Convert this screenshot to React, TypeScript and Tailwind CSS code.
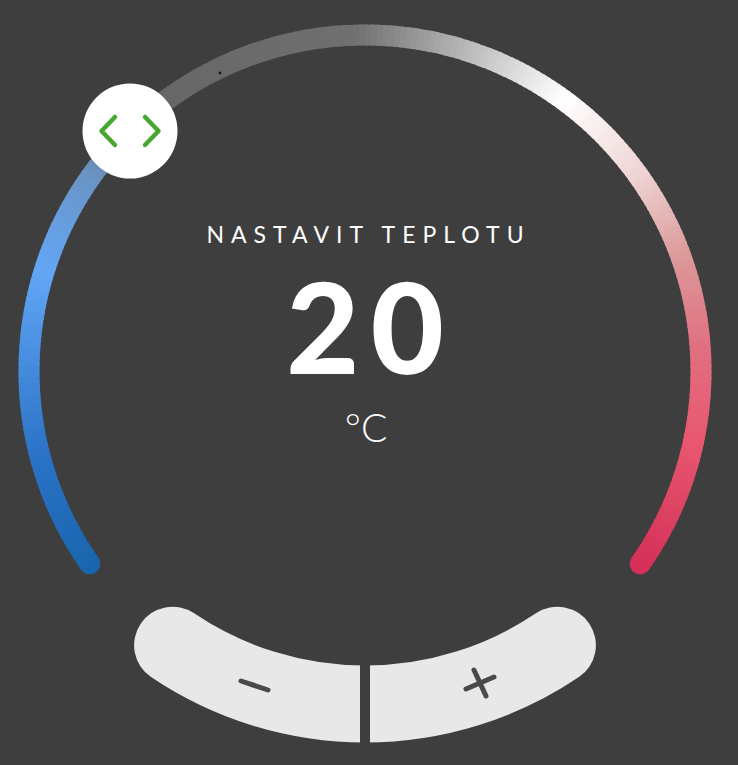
import React from "react";

const CX = 365;
const CY = 371;
const R = 336;

const stops: [number, string][] = [
  [145, "#1a66ae"],
  [165, "#2a72c6"],
  [197, "#62a6f5"],
  [215, "#6a94c6"],
  [232, "#666666"],
  [268, "#707070"],
  [271, "#7a7a7a"],
  [306, "#ffffff"],
  [323, "#f0d8d8"],
  [340, "#dc9a9a"],
  [356, "#e07080"],
  [372, "#e85870"],
  [395, "#d53058"],
];

const hex = (c: string) => [1, 3, 5].map((i) => parseInt(c.slice(i, i + 2), 16));

const colorAt = (a: number) => {
  for (let i = 0; i < stops.length - 1; i++) {
    const [a0, c0] = stops[i];
    const [a1, c1] = stops[i + 1];
    if (a >= a0 && a <= a1) {
      const t = (a - a0) / (a1 - a0);
      const p = hex(c0);
      const q = hex(c1);
      const m = p.map((v, k) => Math.round(v + (q[k] - v) * t));
      return `rgb(${m[0]},${m[1]},${m[2]})`;
    }
  }
  return stops[stops.length - 1][1];
};

const pt = (a: number, r = R) => {
  const rad = (a * Math.PI) / 180;
  return [CX + r * Math.cos(rad), CY + r * Math.sin(rad)];
};

const DialArc = () => {
  const segs = [];
  for (let a = 145; a < 395; a += 1) {
    const [x0, y0] = pt(a);
    const [x1, y1] = pt(Math.min(a + 1.4, 395));
    segs.push(
      <path
        key={a}
        d={`M ${x0} ${y0} A ${R} ${R} 0 0 1 ${x1} ${y1}`}
        stroke={colorAt(a + 0.5)}
        strokeWidth={21}
        fill="none"
      />
    );
  }
  const [sx, sy] = pt(145);
  const [ex, ey] = pt(395);
  return (
    <g>
      <circle cx={sx} cy={sy} r={10.5} fill={colorAt(145)} />
      <circle cx={ex} cy={ey} r={10.5} fill={colorAt(395)} />
      {segs}
    </g>
  );
};

const Knob = () => (
  <g>
    <circle cx={130} cy={131} r={47.5} fill="#ffffff" />
    <path
      d="M 115 117 L 101.5 131 L 115 145 M 145 117 L 158.5 131 L 145 145"
      stroke="#46a830"
      strokeWidth={4.5}
      strokeLinecap="round"
      strokeLinejoin="round"
      fill="none"
    />
  </g>
);

const Buttons = () => (
  <g>
    <path
      d="M 172.6 645.2 A 344 344 0 0 0 557.4 645.2"
      stroke="#e8e8e8"
      strokeWidth={77}
      strokeLinecap="round"
      fill="none"
    />
    <rect x={360} y={640} width={10} height={120} fill="#3e3e3e" />
    <path d="M 241 681 L 268 690" stroke="#4a4a4a" strokeWidth={5} strokeLinecap="round" />
    <path
      d="M 466 689 L 494 677 M 474 670 L 486 696"
      stroke="#4a4a4a"
      strokeWidth={5}
      strokeLinecap="round"
    />
  </g>
);

export default function App() {
  return (
    <div
      className="relative w-[738px] h-[765px] overflow-hidden bg-[#3e3e3e] text-white"
      style={{ fontFamily: "Lato, 'Open Sans', sans-serif" }}
    >
      <svg className="absolute inset-0" width={738} height={765} viewBox="0 0 738 765">
        <DialArc />
        <path d="M 218.5 73 L 221.5 73 M 220 71.5 L 220 74.5" stroke="#000" strokeWidth={1} />
        <Knob />
        <Buttons />
      </svg>
      <div className="relative flex flex-col items-center pt-[223px] pr-[8px]">
        <div className="text-[23px] leading-none font-normal tracking-[0.305em] pl-[0.305em]">
          NASTAVIT TEPLOTU
        </div>
        <div className="mt-[17px] text-[126px] leading-none font-black tracking-[0.09em] pl-[0.09em]">
          20
        </div>
        <div className="mt-[19px] text-[39px] leading-none font-light pl-[2px]">°C</div>
      </div>
    </div>
  );
}
